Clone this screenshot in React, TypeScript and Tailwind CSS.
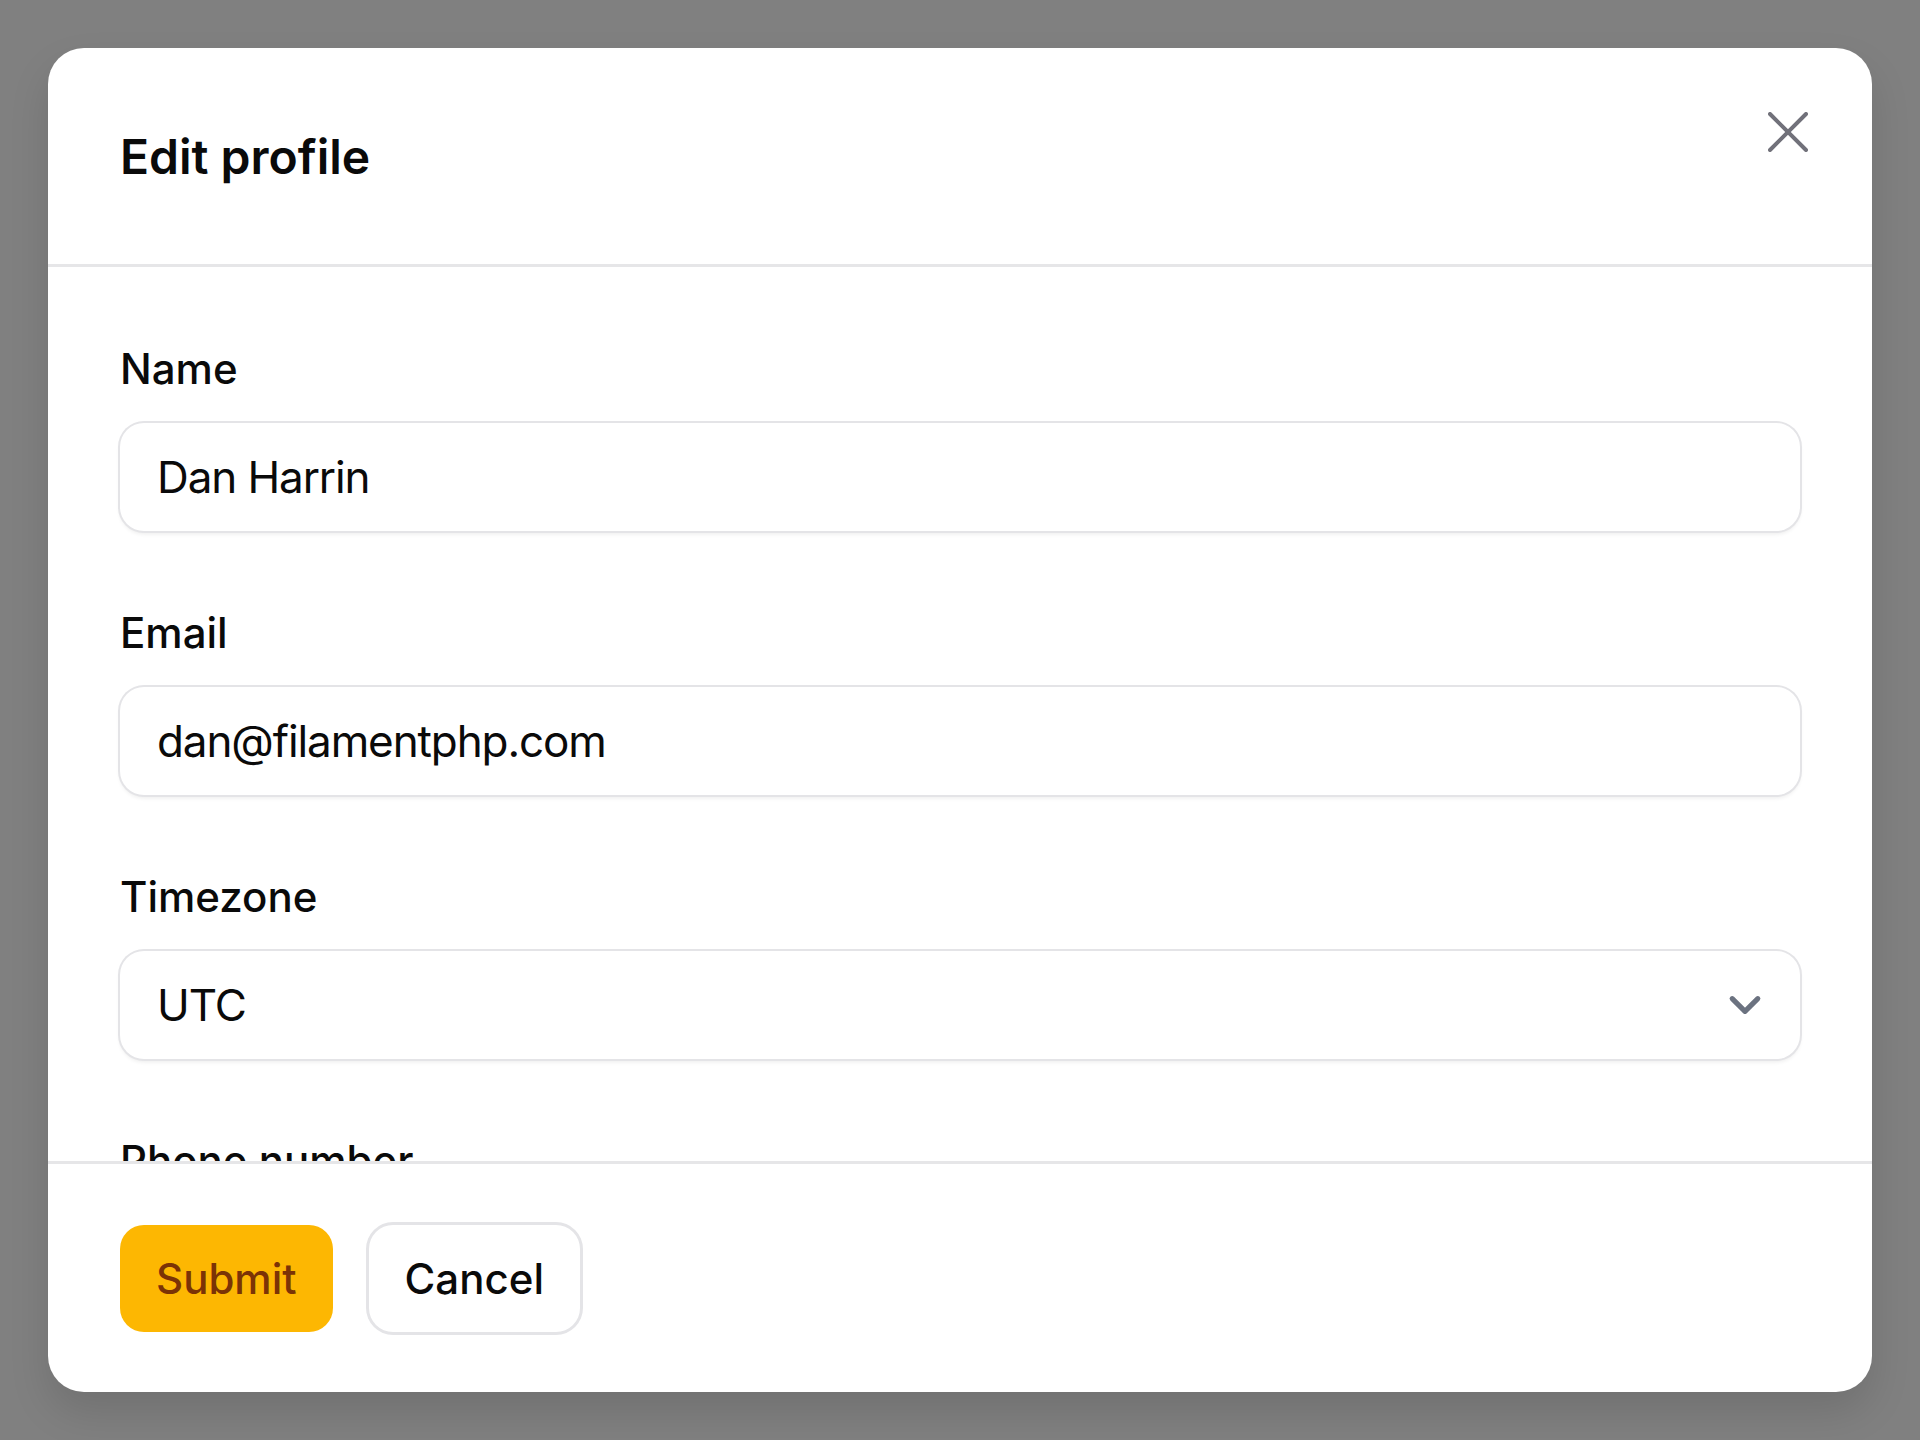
import React from "react";

function Field({ label, children }: { label: string; children: React.ReactNode }) {
  return (
    <div className="flex flex-col gap-[24px]">
      <div className="text-[42px] leading-[60px] font-medium text-[#0a0a0a]">{label}</div>
      {children}
    </div>
  );
}

function TextInput({ value }: { value: string }) {
  return (
    <div className="h-[108px] w-full flex items-center rounded-[24px] ring-[2px] ring-[#e4e4e7] bg-white shadow-[0_3px_4px_rgba(0,0,0,0.08)] pl-[37px] text-[44px] tracking-[-1.1px] text-[#0a0a0a]">
      {value}
    </div>
  );
}

export default function App() {
  return (
    <div
      className="w-[1920px] h-[1440px] bg-[#808080] pt-[48px] pl-[48px]"
      style={{ fontFamily: "Inter, 'Noto Sans', sans-serif" }}
    >
      <div className="relative w-[1824px] h-[1344px] bg-white rounded-[36px] flex flex-col overflow-hidden shadow-[0_20px_40px_rgba(0,0,0,0.12)]">
        <div className="h-[219px] shrink-0 flex items-center px-[72px] border-b-[3px] border-[#e6e6e8]">
          <h2 className="text-[48px] font-semibold text-[#0a0a0a] leading-none mt-[1px]">Edit profile</h2>
        </div>
        <button className="absolute top-[64px] right-[64px] w-[40px] h-[40px]">
          <svg width="40" height="40" viewBox="0 0 40 40" fill="none">
            <path d="M2 2L38 38M38 2L2 38" stroke="#71717a" strokeWidth="4" strokeLinecap="round" />
          </svg>
        </button>
        <div className="flex-1 overflow-hidden px-[72px] pt-[72px]">
          <div className="flex flex-col gap-[72px]">
            <Field label="Name">
              <TextInput value="Dan Harrin" />
            </Field>
            <Field label="Email">
              <TextInput value="dan@filamentphp.com" />
            </Field>
            <Field label="Timezone">
              <div className="h-[108px] w-full flex items-center justify-between rounded-[24px] ring-[2px] ring-[#e4e4e7] bg-white shadow-[0_3px_4px_rgba(0,0,0,0.08)] pl-[37px] pr-[23px] text-[44px] tracking-[-1.1px] text-[#0a0a0a]">
                <span>UTC</span>
                <svg width="64" height="64" viewBox="0 0 20 20" fill="none">
                  <path d="M6 8l4 4 4-4" stroke="#6b7280" strokeWidth="1.6" strokeLinecap="round" strokeLinejoin="round" />
                </svg>
              </div>
            </Field>
            <Field label="Phone number">
              <TextInput value="" />
            </Field>
          </div>
        </div>
        <div className="h-[231px] shrink-0 border-t-[3px] border-[#e6e6e8] px-[72px] flex items-center gap-[36px]">
          <button className="h-[107px] px-[36px] rounded-[24px] bg-[#fdb702] text-[#7b3306] text-[42px] font-medium">
            Submit
          </button>
          <button className="h-[107px] px-[36px] rounded-[24px] bg-white ring-[3px] ring-[#e4e4e7] text-[#0a0a0a] text-[42px] font-medium">
            Cancel
          </button>
        </div>
      </div>
    </div>
  );
}
